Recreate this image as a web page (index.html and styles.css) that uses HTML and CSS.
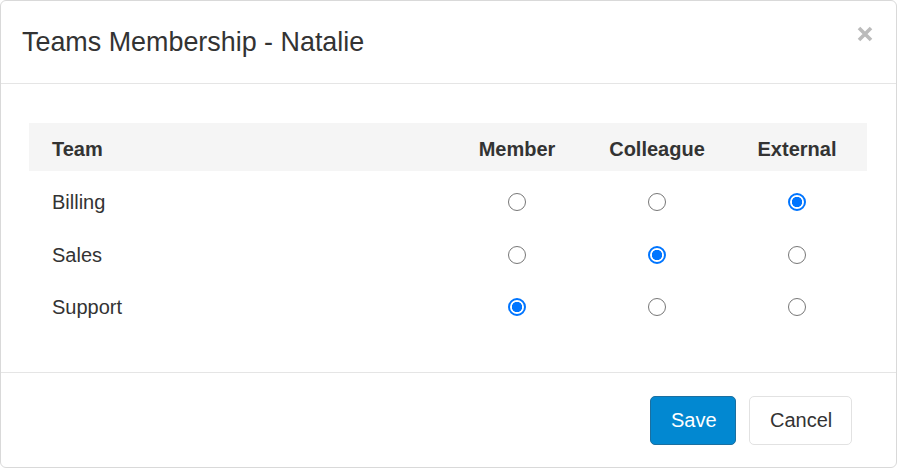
FILE: index.html
```html
<!DOCTYPE html>
<html>
<head>
<meta charset="utf-8">
<link rel="stylesheet" href="styles.css">
</head>
<body>
<div class="modal">
  <div class="modal-header">
    <h1 class="modal-title">Teams Membership - Natalie</h1>
    <button class="close" aria-label="Close">
      <svg width="16" height="16" viewBox="0 0 16 16"><path d="M2 2 L14 14 M14 2 L2 14" stroke="#bbbbbb" stroke-width="3.6" stroke-linecap="butt"/></svg>
    </button>
  </div>
  <div class="modal-body">
    <table class="teams">
      <colgroup><col class="c-name"><col class="c-opt"><col class="c-opt"><col class="c-opt"></colgroup>
      <thead>
        <tr><th class="name">Team</th><th>Member</th><th>Colleague</th><th>External</th></tr>
      </thead>
      <tbody>
        <tr><td class="name">Billing</td><td><input type="radio" name="billing"></td><td><input type="radio" name="billing"></td><td><input type="radio" name="billing" checked></td></tr>
        <tr><td class="name">Sales</td><td><input type="radio" name="sales"></td><td><input type="radio" name="sales" checked></td><td><input type="radio" name="sales"></td></tr>
        <tr><td class="name">Support</td><td><input type="radio" name="support" checked></td><td><input type="radio" name="support"></td><td><input type="radio" name="support"></td></tr>
      </tbody>
    </table>
  </div>
  <div class="modal-footer">
    <button class="btn btn-primary">Save</button>
    <button class="btn btn-default">Cancel</button>
  </div>
</div>
</body>
</html>
```

FILE: styles.css
```css
html, body {
  margin: 0;
  padding: 0;
  background: #fff;
}
body {
  font-family: "Liberation Sans", Arial, sans-serif;
  color: #333;
}
.modal {
  width: 897px;
  height: 468px;
  box-sizing: border-box;
  border: 1px solid #d9d9d9;
  border-radius: 6px;
  display: flex;
  flex-direction: column;
  background: #fff;
}
.modal-header {
  height: 83px;
  box-sizing: border-box;
  border-bottom: 1px solid #e5e5e5;
  display: flex;
  align-items: center;
  justify-content: space-between;
  padding: 0 23px 0 21px;
}
.modal-title {
  margin: 0;
  font-size: 26.9px;
  font-weight: normal;
  line-height: 1.2;
  color: #333;
}
.close {
  background: none;
  border: 0;
  padding: 0;
  margin-top: -16px;
  width: 16px;
  height: 16px;
  display: flex;
}
.modal-body {
  flex: 1;
  padding: 39px 28px 0 28px;
}
.teams {
  width: 838px;
  table-layout: fixed;
  border-collapse: collapse;
  font-size: 20px;
}
.c-name { width: 418px; }
.c-opt { width: 140px; }
.teams th {
  background: #f5f5f5;
  height: 48px;
  padding: 5px 0 0 0;
  box-sizing: border-box;
  font-weight: bold;
  text-align: center;
  vertical-align: middle;
}
.teams th.name, .teams td.name {
  text-align: left;
  padding-left: 23px;
}
.teams td {
  height: 52.5px;
  box-sizing: border-box;
  padding: 20px 0 9px 0;
  text-align: center;
  vertical-align: top;
  line-height: 22px;
}
.teams input[type="radio"] {
  -webkit-appearance: none;
  appearance: none;
  box-sizing: border-box;
  width: 18px;
  height: 18px;
  margin: 2px 0 0 0;
  vertical-align: top;
  border-radius: 50%;
  border: 1.5px solid #777;
  background: #fff;
}
.teams input[type="radio"]:checked {
  border: 2px solid #0075ff;
  background: radial-gradient(circle, #0075ff 0 4.9px, #fff 5.4px);
}
.modal-footer {
  height: 95px;
  box-sizing: border-box;
  border-top: 1px solid #e5e5e5;
  display: flex;
  align-items: center;
  justify-content: flex-end;
  gap: 13px;
  padding: 0 44px 0 0;
}
.btn {
  font-family: "Liberation Sans", Arial, sans-serif;
  font-size: 20px;
  height: 49px;
  padding: 0 20px;
  border-radius: 5px;
  cursor: pointer;
}
.btn-primary {
  background: #0288d1;
  border: 1px solid #1b6fa0;
  color: #fff;
  width: 86px;
}
.btn-default {
  background: #fff;
  border: 1px solid #e2e2e2;
  color: #333;
  width: 103px;
}
```
